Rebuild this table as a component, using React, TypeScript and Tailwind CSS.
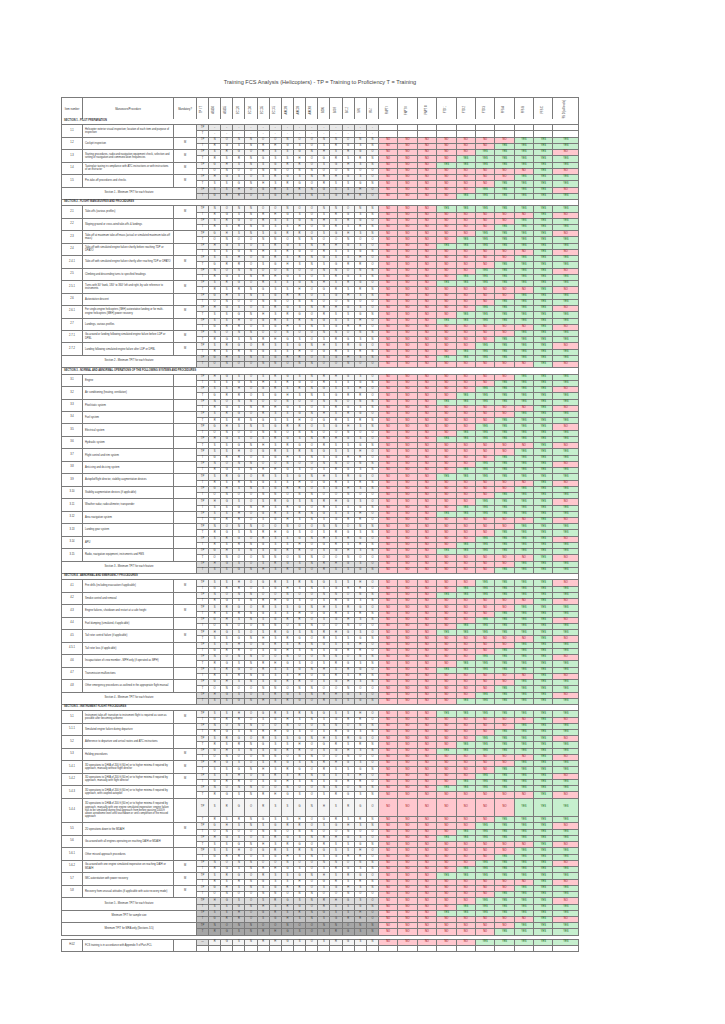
import React from 'react';

type Item = { no: string; text: string; m?: boolean; dash?: boolean; tall?: boolean };
type Section = { title: string; minLabel: string; items: Item[] };

const GRID =
  'grid w-fit grid-cols-[21px_91px_23px_12px_repeat(14,12.15px)_repeat(9,19.4px)_25.6px] auto-rows-[6.24px]';

const AIRCRAFT = ['AS350', 'AS355', 'EC120', 'EC130', 'EC135', 'EC145', 'AW109', 'AW139', 'AW169', 'B206', 'B407', 'B412', 'S76', 'R44'];
const DEVICES = ['FNPT I', 'FNPT II', 'FNPT III', 'FTD 1', 'FTD 2', 'FTD 3', 'FFS A', 'FFS B', 'FFS C', 'FFS D (all levels)'];

const SECTIONS: Section[] = [
  {
    title: 'SECTION 1 - PILOT PREPARATION',
    minLabel: 'Section 1 - Minimum TP/T for each feature',
    items: [
      { no: '1.1', text: 'Helicopter exterior visual inspection; location of each item and purpose of inspection', dash: true },
      { no: '1.2', text: 'Cockpit inspection', m: true },
      { no: '1.3', text: 'Starting procedures, radio and navigation equipment check, selection and setting of navigation and communication frequencies', m: true },
      { no: '1.4', text: 'Taxiing/air taxiing in compliance with ATC instructions or with instructions of an instructor', m: true },
      { no: '1.5', text: 'Pre-take-off procedures and checks', m: true },
    ],
  },
  {
    title: 'SECTION 2 - FLIGHT MANOEUVRES AND PROCEDURES',
    minLabel: 'Section 2 - Minimum TP/T for each feature',
    items: [
      { no: '2.1', text: 'Take-offs (various profiles)', m: true },
      { no: '2.2', text: 'Sloping ground or cross-wind take-offs & landings' },
      { no: '2.3', text: 'Take-off at maximum take-off mass (actual or simulated maximum take-off mass)' },
      { no: '2.4', text: 'Take-off with simulated engine failure shortly before reaching TDP or DPATO' },
      { no: '2.4.1', text: 'Take-off with simulated engine failure shortly after reaching TDP or DPATO', m: true },
      { no: '2.5', text: 'Climbing and descending turns to specified headings' },
      { no: '2.5.1', text: 'Turns with 30° bank, 180° to 360° left and right, by sole reference to instruments', m: true },
      { no: '2.6', text: 'Autorotative descent' },
      { no: '2.6.1', text: 'For single-engine helicopters (SEH) autorotative landing or for multi-engine helicopters (MEH) power recovery', m: true },
      { no: '2.7', text: 'Landings, various profiles' },
      { no: '2.7.1', text: 'Go-around or landing following simulated engine failure before LDP or DPBL', m: true },
      { no: '2.7.2', text: 'Landing following simulated engine failure after LDP or DPBL', m: true },
    ],
  },
  {
    title: 'SECTION 3 - NORMAL AND ABNORMAL OPERATIONS OF THE FOLLOWING SYSTEMS AND PROCEDURES',
    minLabel: 'Section 3 - Minimum TP/T for each feature',
    items: [
      { no: '3.1', text: 'Engine' },
      { no: '3.2', text: 'Air conditioning (heating, ventilation)' },
      { no: '3.3', text: 'Pitot/static system' },
      { no: '3.4', text: 'Fuel system' },
      { no: '3.5', text: 'Electrical system' },
      { no: '3.6', text: 'Hydraulic system' },
      { no: '3.7', text: 'Flight control and trim system' },
      { no: '3.8', text: 'Anti-icing and de-icing system' },
      { no: '3.9', text: 'Autopilot/flight director, stability augmentation devices' },
      { no: '3.10', text: 'Stability augmentation devices (if applicable)' },
      { no: '3.11', text: 'Weather radar, radio altimeter, transponder' },
      { no: '3.12', text: 'Area navigation system' },
      { no: '3.13', text: 'Landing gear system' },
      { no: '3.14', text: 'APU' },
      { no: '3.15', text: 'Radio, navigation equipment, instruments and FMS' },
    ],
  },
  {
    title: 'SECTION 4 - ABNORMAL AND EMERGENCY PROCEDURES',
    minLabel: 'Section 4 - Minimum TP/T for each feature',
    items: [
      { no: '4.1', text: 'Fire drills (including evacuation if applicable)', m: true },
      { no: '4.2', text: 'Smoke control and removal' },
      { no: '4.3', text: 'Engine failures, shutdown and restart at a safe height', m: true },
      { no: '4.4', text: 'Fuel dumping (simulated, if applicable)' },
      { no: '4.5', text: 'Tail rotor control failure (if applicable)', m: true },
      { no: '4.5.1', text: 'Tail rotor loss (if applicable)' },
      { no: '4.6', text: 'Incapacitation of crew member - MPH only (if operated as MPH)' },
      { no: '4.7', text: 'Transmission malfunctions' },
      { no: '4.8', text: 'Other emergency procedures as outlined in the appropriate flight manual' },
    ],
  },
  {
    title: 'SECTION 5 - INSTRUMENT FLIGHT PROCEDURES',
    minLabel: 'Section 5 - Minimum TP/T for each feature',
    items: [
      { no: '5.1', text: 'Instrument take-off; transition to instrument flight is required as soon as possible after becoming airborne', m: true },
      { no: '5.1.1', text: 'Simulated engine failure during departure' },
      { no: '5.2', text: 'Adherence to departure and arrival routes and ATC instructions' },
      { no: '5.3', text: 'Holding procedures', m: true },
      { no: '5.4.1', text: '3D operations to DH/A of 200 ft (60 m) or to higher minima if required by approach, manually without flight director', m: true },
      { no: '5.4.2', text: '3D operations to DH/A of 200 ft (60 m) or to higher minima if required by approach, manually with flight director', m: true },
      { no: '5.4.3', text: '3D operations to DH/A of 200 ft (60 m) or to higher minima if required by approach, with coupled autopilot' },
      { no: '5.4.4', text: '3D operations to DH/A of 200 ft (60 m) or to higher minima if required by approach, manually with one engine simulated inoperative; engine failure has to be simulated during final approach from before passing 1000 ft above aerodrome level until touchdown or until completion of the missed approach', tall: true },
      { no: '5.5', text: '2D operations down to the MDA/H', m: true },
      { no: '5.6', text: 'Go-around with all engines operating on reaching DA/H or MDA/H' },
      { no: '5.6.1', text: 'Other missed approach procedures' },
      { no: '5.6.2', text: 'Go-around with one engine simulated inoperative on reaching DA/H or MDA/H', m: true },
      { no: '5.7', text: 'IMC autorotation with power recovery', m: true },
      { no: '5.8', text: 'Recovery from unusual attitudes (if applicable with auto recovery mode)', m: true },
    ],
  },
];

const LETTERS = ['S', 'R', 'G', 'S', 'N', 'R', 'H', 'G', 'S', 'O'];
const letter = (r: number, c: number) => LETTERS[(r * 7 + c * 3 + ((r * c) % 5)) % LETTERS.length];

// first YES column per row, last column flips every third row
const results = (r: number) => {
  const k = 3 + ((r * 5) % 6);
  return DEVICES.map((_, j) => (j === 9 ? j >= k && r % 3 !== 1 : j >= k));
};

const cell = 'border-r border-b border-[#7b7b7b] flex items-center justify-center whitespace-nowrap leading-none';

function Result({ yes, span }: { yes: boolean; span?: string }) {
  return (
    <div className={`${cell} ${span ?? ''} ${yes ? 'bg-[#c6efce] text-[#006100]' : 'bg-[#ffc7ce] text-[#9c0006]'}`}>
      {yes ? 'YES' : 'NO'}
    </div>
  );
}

function buildRows() {
  const out: React.ReactNode[] = [];
  let k = 0;
  let r = 0;

  const dataRow = (label: string, bg: string, dash: boolean, span?: string) => {
    out.push(<div key={k++} className={`${cell} ${span ?? ''} ${bg}`}>{label}</div>);
    AIRCRAFT.forEach((_, c) =>
      out.push(
        <div key={k++} className={`${cell} ${span ?? ''} ${bg}`}>
          {dash ? '-' : letter(r, c)}
        </div>,
      ),
    );
    const res = results(r);
    DEVICES.forEach((_, j) =>
      dash
        ? out.push(<div key={k++} className={`${cell} ${span ?? ''}`} />)
        : out.push(<Result key={k++} yes={res[j]} span={span} />),
    );
    r++;
  };

  const minRows = (label: string, bg: string) => {
    out.push(
      <div key={k++} className={`${cell} col-span-3 row-span-2 bg-white`}>
        {label}
      </div>,
    );
    dataRow('TP', bg, false);
    dataRow('T', bg, false);
  };

  SECTIONS.forEach((s, si) => {
    out.push(
      <div key={k++} className="col-span-28 border-r border-b border-[#7b7b7b] flex items-center pl-[2px] font-bold leading-none">
        {s.title}
      </div>,
    );
    s.items.forEach((it) => {
      const span = it.tall ? 'row-span-4' : 'row-span-2';
      out.push(<div key={k++} className={`${cell} ${span}`}>{it.no}</div>);
      out.push(
        <div key={k++} className={`border-r border-b border-[#7b7b7b] ${span} flex items-center px-[2px] leading-[3.3px] text-left`}>
          {it.text}
        </div>,
      );
      out.push(<div key={k++} className={`${cell} ${span}`}>{it.m ? 'M' : ''}</div>);
      dataRow('TP', it.dash ? 'bg-[#e9e9e9]' : 'bg-[#f4f4f4]', !!it.dash, it.tall ? 'row-span-3' : undefined);
      dataRow('T', 'bg-white', !!it.dash);
    });
    minRows(s.minLabel, 'bg-[#dcdcdc]');
    if (si === SECTIONS.length - 1) {
      minRows('Minimum TP/T for sample size', 'bg-[#c3c3c3]');
      minRows('Minimum TP/T for MRA only (Sections 3-5)', 'bg-[#a6a6a6]');
    }
  });
  return out;
}

export default function App() {
  return (
    <div className="min-h-screen bg-white pt-[79px] pl-[61px] font-['Liberation_Sans',Arial,sans-serif] text-[#333]">
      <div className="w-[518px] text-center text-[5.6px] leading-[7px] text-[#444] mb-[11px]">
        Training FCS Analysis (Helicopters) - TP = Training to Proficiency T = Training
      </div>

      <div className="w-fit text-[2.6px]">
        <div className={`${GRID} border-l border-t border-[#7b7b7b] h-[22px] overflow-hidden`}>
          <div className={`${cell} row-span-4`}>Item number</div>
          <div className={`${cell} row-span-4`}>Manoeuvre/Procedure</div>
          <div className={`${cell} row-span-4`}>Mandatory?</div>
          <div className={`${cell} row-span-4`}>
            <span className="[writing-mode:vertical-rl] rotate-180">TP / T</span>
          </div>
          {AIRCRAFT.map((a) => (
            <div key={a} className={`${cell} row-span-4`}>
              <span className="[writing-mode:vertical-rl] rotate-180">{a}</span>
            </div>
          ))}
          {DEVICES.map((d) => (
            <div key={d} className={`${cell} row-span-4`}>
              <span className="[writing-mode:vertical-rl] rotate-180">{d}</span>
            </div>
          ))}
        </div>

        <div className={`${GRID} border-l border-[#7b7b7b]`}>{buildRows()}</div>

        <div className={`${GRID} mt-[3px] border-l border-t border-[#7b7b7b]`}>
          <div className={`${cell} row-span-2`}>H.02</div>
          <div className="border-r border-b border-[#7b7b7b] row-span-2 flex items-center px-[2px] leading-[3.3px]">
            FCS training is in accordance with Appendix 9 of Part-FCL
          </div>
          <div className={`${cell} row-span-2`} />
          <div className={`${cell} bg-[#dcdcdc]`}>—</div>
          {AIRCRAFT.map((a, c) => (
            <div key={a} className={`${cell} bg-[#f4f4f4]`}>{letter(3, c)}</div>
          ))}
          {DEVICES.map((d, j) => (
            <Result key={d} yes={j >= 5} />
          ))}
          <div className={cell} />
          {AIRCRAFT.map((a) => (
            <div key={a + 't'} className={cell} />
          ))}
          {DEVICES.map((d) => (
            <div key={d + 't'} className={cell} />
          ))}
        </div>
      </div>
    </div>
  );
}
